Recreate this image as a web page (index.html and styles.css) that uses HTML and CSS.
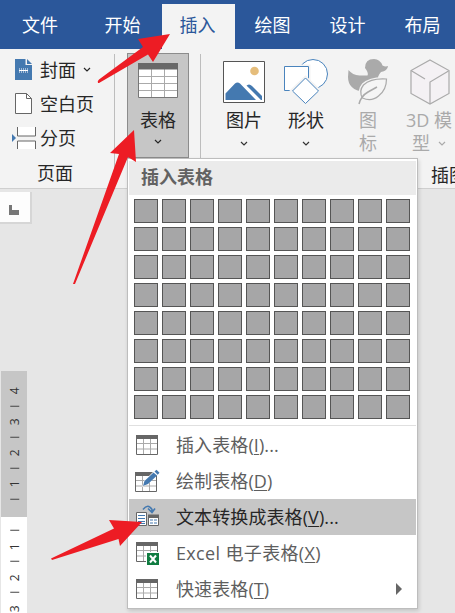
FILE: index.html
```html
<!DOCTYPE html>
<html lang="zh-CN">
<head>
<meta charset="utf-8">
<title>插入表格</title>
<link rel="stylesheet" href="styles.css">
</head>
<body>
<svg class="defs" width="0" height="0" aria-hidden="true">
  <symbol id="grid" viewBox="0 0 22 20">
    <path d="M.5 2h21v17.500H.5z" fill="#fff"/>
    <path d="M1 8.500h20M1 14h20M7.500 4v15M14.500 4v15" stroke="#aaa" fill="none"/>
    <path d="M.5 2v17.500h21V2" stroke="#666" fill="none"/>
    <path d="M0 0h22v4H0z" fill="#666"/>
  </symbol>
  <symbol id="chev" viewBox="0 0 8 6"><path d="M1 1l3 3 3-3" fill="none" stroke="currentColor" stroke-width="1.200"/></symbol>
</svg>
<nav class="tabs">
  <span class="tab file">文件</span><span class="tab">开始</span><span class="tab active">插入</span><span class="tab">绘图</span><span class="tab">设计</span><span class="tab">布局</span>
</nav>
<section class="ribbon">
  <div class="group pages">
    <div class="row"><svg width="24" height="24" viewBox="0 0 24 24"><path d="M3 1h10.500v6H20v15H3z" fill="#4479b0"/><path d="M15 1l5 5h-5z" fill="#4479b0"/><path d="M7 11h9M7 14h9" stroke="#fff" stroke-dasharray="1 1"/><path d="M7 12.500h9" stroke="#fff" /></svg><span>封面</span><svg class="chev" width="8" height="6"><use href="#chev"/></svg></div>
    <div class="row"><svg width="24" height="24" viewBox="0 0 24 24"><path d="M3.500 1.500h11l5 5v15h-16z" fill="#fff" stroke="#666"/><path d="M14.500 1.500v5h5" fill="none" stroke="#666"/></svg><span>空白页</span></div>
    <div class="row"><svg width="24" height="24" viewBox="0 0 24 24"><path d="M0 8l4 4-4 4z" fill="#4479b0"/><path d="M5.500 1v9h18V1M5.500 23v-8h18v8" fill="#fff" stroke="#666"/></svg><span>分页</span></div>
    <div class="caption">页面</div>
  </div>
  <div class="group tables">
    <div class="big pressed">
      <svg width="40" height="35" viewBox="0 0 40 35"><path d="M.5.5h39v34H.5z" fill="#fff" stroke="#777"/><path d="M1 13.500h38M1 20.500h38M1 27.500h38M13.500 6v28M26.500 6v28" stroke="#aaa"/><path d="M0 0h40v6.500H0z" fill="#686868"/></svg>
      <span class="label">表格</span>
      <svg class="chev" width="8" height="6"><use href="#chev"/></svg>
    </div>
  </div>
  <div class="group art">
    <div class="tools">
      <div class="big">
        <svg width="44" height="44" viewBox="0 0 44 44"><path d="M1.500 1.500h41v41h-41z" fill="#fff" stroke="#555"/><circle cx="32.500" cy="11" r="4.300" fill="#e5bd7b"/><path d="M3.500 40v-6.500L13 23.500q2.500-2 5 0L34 40zM24 26q3-3 6 0l10 10v4h-2z" fill="#4479b0"/><path d="M22 24l17 17" stroke="#fff" stroke-width="1.300"/></svg>
        <span class="label">图片</span>
        <svg class="chev" width="8" height="6"><use href="#chev"/></svg>
      </div>
      <div class="big">
        <svg width="46" height="46" viewBox="0 0 46 46"><circle cx="30" cy="15" r="14.500" fill="#fff" stroke="#4a84bd"/><path d="M1.500 7.500h24v24h-24z" fill="#fff" stroke="#f3f3f3" stroke-width="4"/><path d="M1.500 7.500h24v24h-24z" fill="#fff" stroke="#4a84bd"/><path d="M22.500 19l13.500 13-13.500 13L9 32z" fill="#fff" stroke="#f3f3f3" stroke-width="4"/><path d="M22.500 19l13 13-13 12.500L9.500 32z" fill="#fff" stroke="#4a84bd"/></svg>
        <span class="label">形状</span>
        <svg class="chev" width="8" height="6"><use href="#chev"/></svg>
      </div>
      <div class="big off">
        <svg width="42" height="46" viewBox="0 0 42 46"><path d="M18 9Q18 0 27 0q6 0 8.500 6.500 3 1.500 5.500.5-.5 5-7 6-2 2-3 5l2 8q-4 8-16 7Q1 31 1 18l.5-7q4 5 11 5.500h8Q22 14 18 9z" fill="#aaa"/><path d="M39.500 20Q24 19 16.500 26q-5 6-1 13 9 4 16-2 8-6 8-17z" fill="#f5f5f5" stroke="#f3f3f3" stroke-width="4"/><path d="M39.500 20Q24 19 16.500 26q-5 6-1 13 9 4 16-2 8-6 8-17z" fill="#f5f5f5" stroke="#aaa" stroke-width="1.200"/><path d="M12 45q2-8 9-12l9-5" fill="none" stroke="#aaa" stroke-width="1.500"/></svg>
        <span class="label">图<br>标</span>
      </div>
      <div class="big off">
        <svg width="40" height="46" viewBox="0 0 40 46"><path d="M20 1l19 10.500v23L20 45 1 34.500v-23z" fill="#f4f1f4" stroke="#aaa" stroke-width="1.200"/><path d="M20 45V23l18.500-11M1 11.500L15 20" fill="none" stroke="#aaa" stroke-width="1.200"/></svg>
        <span class="label model">3D 模<br>型<svg class="chev" width="8" height="6"><use href="#chev"/></svg></span>
      </div>
    </div>
    <div class="caption">插图</div>
  </div>
</section>
<main class="work">
  <div class="tabstop"><i></i></div>
  <div class="ruler">
    <div class="margin"><b>4</b><b class="t"></b><b>3</b><b class="t"></b><b>2</b><b class="t"></b><b>1</b><b class="t"></b></div>
    <div class="page"><b class="t"></b><b>1</b><b class="t"></b><b>2</b><b class="t"></b><b>3</b></div>
  </div>
</main>
<div class="menu">
  <div class="title">插入表格</div>
  <div class="cells">
    <i></i><i></i><i></i><i></i><i></i><i></i><i></i><i></i><i></i><i></i>
    <i></i><i></i><i></i><i></i><i></i><i></i><i></i><i></i><i></i><i></i>
    <i></i><i></i><i></i><i></i><i></i><i></i><i></i><i></i><i></i><i></i>
    <i></i><i></i><i></i><i></i><i></i><i></i><i></i><i></i><i></i><i></i>
    <i></i><i></i><i></i><i></i><i></i><i></i><i></i><i></i><i></i><i></i>
    <i></i><i></i><i></i><i></i><i></i><i></i><i></i><i></i><i></i><i></i>
    <i></i><i></i><i></i><i></i><i></i><i></i><i></i><i></i><i></i><i></i>
    <i></i><i></i><i></i><i></i><i></i><i></i><i></i><i></i><i></i><i></i>
  </div>
  <div class="item"><svg width="26" height="24"><use href="#grid" x="2" y="2" width="22" height="20"/></svg><span>插入表格(<u>I</u>)...</span></div>
  <div class="item"><svg width="26" height="24"><use href="#grid" x="1" y="3" width="22" height="20"/><path d="M8 18l2-6L21 1l4 3-11 11z" fill="#fff"/><path d="M9 17l1.500-5 9-8.500L23 6.500 14 15z" fill="#4479b0"/><path d="M20.500 2.500l2-1.800 3 3-1.800 2z" fill="#4479b0"/></svg><span>绘制表格(<u>D</u>)</span></div>
  <div class="item hot"><svg width="26" height="24"><path d="M2.500 7.500h10v13h-10z" fill="#fff" stroke="#666"/><path d="M4 10.500h7M4 13.500h7M4 16.500h7M4 18.500h7" stroke="#4479b0"/><path d="M14.500 11h10v9.500h-10z" fill="#fff" stroke="#666"/><path d="M14 9.500h11V13H14z" fill="#666"/><path d="M16 15h3m1 0h3m-7 3h3m1 0h3" stroke="#4479b0"/><path d="M9 4.500q5-6.500 9 0v2.500M14 3.500l4 4 3-4" fill="none" stroke="#4479b0" stroke-width="1.600"/></svg><span>文本转换成表格(<u>V</u>)...</span></div>
  <div class="item"><svg width="26" height="24"><use href="#grid" x="2" y="1" width="22" height="20"/><path d="M12 11h13v13H12z" fill="#fff"/><path d="M13 12h12v12H13z" fill="#107c41"/><path d="M16 14.500l6 7m0-7l-6 7" stroke="#fff" stroke-width="2"/></svg><span class="excel">Excel 电子表格(<u>X</u>)</span></div>
  <div class="item"><svg width="26" height="24"><use href="#grid" x="2" y="2" width="22" height="20"/></svg><span>快速表格(<u>T</u>)</span><em class="more"></em></div>
</div>
<svg class="arrows" width="455" height="613" viewBox="0 0 455 613" fill="#ed1c24">
  <path d="M98 83q-1-2 1-3.500L143 47l-5-8 32-5-17 28-5-7.500-49 28.500z"/>
  <path d="M73 284l46-130-9-1 24-23 2 32-8-5-53 127z"/>
  <path d="M51 558.500l63-30-5-8.500 33 2-22 24-1.500-7L52 560z"/>
</svg>
</body>
</html>
```
FILE: styles.css
```css
* { box-sizing: border-box; }
body {
  margin: 0;
  width: 455px;
  height: 613px;
  overflow: hidden;
  position: relative;
  background: #e6e6e6;
  color: #262626;
  font: 18px/24px "Open Sans", "Noto Sans CJK SC", sans-serif;
}
svg { display: block; flex: none; }
.defs { position: absolute; }
.tabs {
  height: 49px;
  display: flex;
  align-items: flex-end;
  background: #2b579a;
  color: #fff;
}
.tab {
  width: 75px;
  height: 45px;
  flex: none;
  line-height: 43px;
  text-align: center;
}
.tab.file { width: 86px; padding-right: 6px; }
.tab.active {
  width: 73px;
  margin: 0 1px;
  background: #f3f3f3;
  color: #2b579a;
}
.tab:not(.file) { padding-right: 2px; }

.ribbon {
  height: 140px;
  display: flex;
  background: #f3f3f3;
  border-bottom: 1px solid #cfcfcf;
}
.group { flex: none; padding-top: 4px; }
.pages { width: 115px; padding: 4px 0 0 12px; }
.tables { width: 86px; padding-left: 12px; }
.pages, .tables {
  background: linear-gradient(#bdbdbd, #bdbdbd) right 5px / 1px 130px no-repeat;
}
.row { height: 34px; display: flex; align-items: center; gap: 4px; }
.row .chev { margin-left: 3px; }
.caption { line-height: 24px; }
.pages .caption { padding: 6px 0 0 25px; }
.big {
  display: flex;
  flex-direction: column;
  align-items: center;
  height: 105px;
  width: 62px;
  flex: none;
}
.pressed { background: #c6c6c6; border: 1px solid #8c8c8c; padding-top: 9px; }
.pressed .label { margin-top: 10px; }
.pressed > .chev { margin-top: 8px; }
.big > .chev { margin-top: 7px; }
.tools { display: flex; padding-left: 12px; height: 105px; }
.tools .big { padding-top: 6px; }
.tools .label { margin-top: 4px; white-space: nowrap; text-align: center; line-height: 23px; }
.tools .big > .chev { margin-top: 9px; }
.tools .big > svg:first-child { height: 46px; }
.art .chev { color: #333; }
.off, .off .label, .off .chev { color: #aaa; }
.model { margin-left: -2px; }
.model .chev { display: inline-block; vertical-align: 3px; margin-left: 8px; }
.art .caption { padding: 5px 0 0 230px; }

.work { height: 424px; padding-top: 3px; }
.tabstop {
  width: 32px;
  height: 32px;
  border: solid #d6d6d6;
  border-width: 0 2px 2px 0;
  background: #fdfdfd;
  padding: 13px 0 0 9px;
}
.tabstop i { display: block; width: 10px; height: 10px; border: solid #777; border-width: 0 0 5px 3px; }
.ruler { width: 26px; margin: 147px 0 0 1px; }
.margin { height: 146px; padding-top: 12px; background: #c6c6c6; }
.page { height: 100px; padding-top: 6px; background: #fff; }
.ruler b {
  height: 15.500px;
  display: flex;
  align-items: center;
  justify-content: center;
  font: 12px/15px "Open Sans", sans-serif;
  color: #333;
  transform: translateX(1px) rotate(-90deg);
}
.ruler .t::before { content: ""; width: 1px; height: 9px; background: #444; }

.menu {
  position: absolute;
  left: 127px;
  top: 158px;
  width: 291px;
  height: 451px;
  border: 1px solid #bdbdbd;
  background: #fff;
  padding: 2px 1px 0;
  box-shadow: 1px 2px 4px rgba(0, 0, 0, .15);
}
.title {
  height: 34px;
  padding-left: 12px;
  background: #ebebeb;
  color: #626262;
  font-weight: 700;
  line-height: 32px;
}
.cells {
  display: grid;
  grid-template-columns: repeat(10, 24px);
  grid-auto-rows: 24px;
  gap: 4px;
  padding: 4px 0 6px 5px;
  border-bottom: 1px solid #e0e0e0;
  margin-bottom: 1px;
}
.cells i { background: #a6a6a7; border: 1px solid #555; }
.item {
  height: 36px;
  display: flex;
  align-items: center;
  padding-left: 5px;
  gap: 16px;
  color: #5e5e5e;
  letter-spacing: .1px;
  white-space: nowrap;
}
.item.hot { background: #c6c6c6; color: #262626; }
.item u { text-decoration-thickness: 1px; text-underline-offset: 2px; }
.excel { letter-spacing: .35px; }
.more {
  margin: 0 14px 0 auto;
  border: solid transparent;
  border-width: 6px 0 6px 6px;
  border-left-color: #666;
}
.arrows { position: absolute; left: 0; top: 0; }
```
